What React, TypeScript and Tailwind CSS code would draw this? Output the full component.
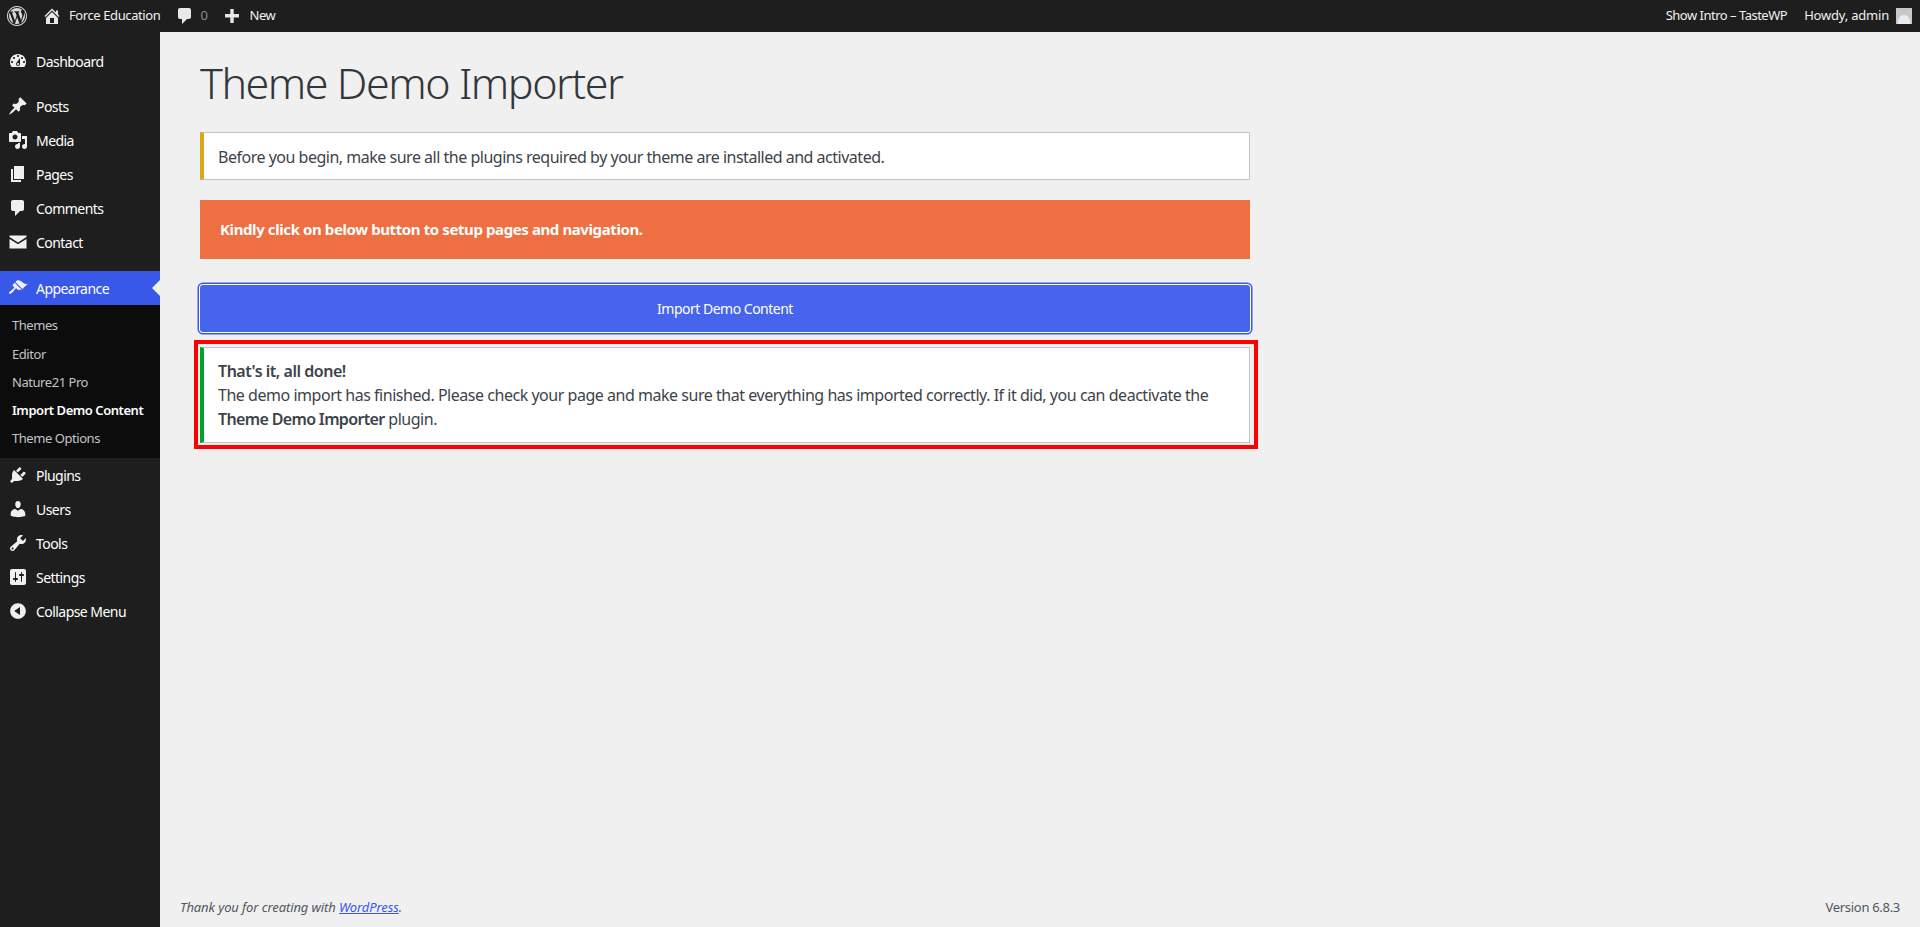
import React from 'react';

const icons = {
  dashboard: 'M3.76 16h12.48c1.1-1.37 1.76-3.11 1.76-5 0-4.42-3.58-8-8-8s-8 3.58-8 8c0 1.89.66 3.63 1.76 5zM10 4c.55 0 1 .45 1 1s-.45 1-1 1-1-.45-1-1 .45-1 1-1zM6 6c.55 0 1 .45 1 1s-.45 1-1 1-1-.45-1-1 .45-1 1-1zm8 0c.55 0 1 .45 1 1s-.45 1-1 1-1-.45-1-1 .45-1 1-1zm-5.37 5.55L12 7v6c0 1.1-.9 2-2 2s-2-.9-2-2c0-.57.24-1.08.63-1.45zM4 10c.55 0 1 .45 1 1s-.45 1-1 1-1-.45-1-1 .45-1 1-1zm12 0c.55 0 1 .45 1 1s-.45 1-1 1-1-.45-1-1 .45-1 1-1zm-5 3c0-.55-.45-1-1-1s-1 .45-1 1 .45 1 1 1 1-.45 1-1z',
  posts: 'M10.44 3.02l1.82-1.82 6.36 6.35-1.83 1.82c-1.05-.68-2.48-.57-3.41.36l-.75.75c-.92.93-1.04 2.35-.35 3.41l-1.83 1.82-2.41-2.41-2.8 2.79c-.42.42-3.38 2.71-3.8 2.29s1.86-3.39 2.28-3.81l2.79-2.79L4.1 9.36l1.83-1.82c1.05.69 2.48.57 3.4-.36l.75-.75c.93-.92 1.05-2.35.36-3.41z',
  media: 'M13 11V4c0-.55-.45-1-1-1h-1.67L9 1H5L3.67 3H2c-.55 0-1 .45-1 1v7c0 .55.45 1 1 1h10c.55 0 1-.45 1-1zM7 4.5c1.38 0 2.5 1.12 2.5 2.5S8.38 9.5 7 9.5 4.5 8.38 4.5 7 5.62 4.5 7 4.5zM14 6h5v10.5c0 1.38-1.12 2.5-2.5 2.5S14 17.88 14 16.5s1.12-2.5 2.5-2.5c.17 0 .34.02.5.05V9h-3V6zm-4 8.05V13h2v3.5c0 1.38-1.12 2.5-2.5 2.5S7 17.88 7 16.5 8.12 14 9.5 14c.17 0 .34.02.5.05z',
  pages: 'M6 15V2h10v13H6zm-1 1h8v2H3V5h2v11z',
  comments: 'M5 2h9c1.1 0 2 .9 2 2v7c0 1.1-.9 2-2 2h-2l-5 5v-5H5c-1.1 0-2-.9-2-2V4c0-1.1.9-2 2-2z',
  contact: 'M1.5 3.5h17v1.6L10 10.4 1.5 5.1V3.5zM1.5 7l8.5 5.3L18.500 7v9.500h-17V7z',
  appearance: 'M14.48 11.06L7.41 3.99l1.5-1.5c.5-.56 2.3-.47 3.51.32 1.21.8 1.43 1.28 2.91 2.1 1.18.64 2.45 1.26 4.45.85zm-.71.71L6.7 4.7 4.93 6.47c-.39.39-.39 1.02 0 1.41l1.06 1.06c.39.39.39 1.03 0 1.42-.6.6-1.43 1.11-2.21 1.69-.35.26-.7.53-1.01.84C1.43 13.23.4 14.75 1.2 15.55s2.32-.23 3.69-1.59c.31-.31.58-.66.84-1.01.58-.78 1.09-1.61 1.69-2.21.39-.39 1.02-.39 1.41 0l1.06 1.06c.39.39 1.02.39 1.41 0z',
  plugins: 'M13.11 4.36L9.87 7.6 8 5.73l3.24-3.24c.35-.34 1.05-.2 1.56.32.52.51.66 1.21.31 1.55zm-8 1.77l.91-1.12 9.01 9.01-1.19.84c-.71.71-2.63 1.16-3.82 1.16H6.14L4.9 17.26c-.59.59-1.54.59-2.12 0-.59-.58-.59-1.53 0-2.12l1.24-1.24v-3.88c0-1.13.4-3.19 1.09-3.89zm7.26 3.97l3.24-3.24c.34-.35 1.04-.21 1.55.31.52.51.66 1.21.31 1.55l-3.24 3.25z',
  users: 'M10 9.25c-2.27 0-2.73-3.44-2.73-3.44C7 4.02 7.82 2 9.97 2c2.16 0 2.98 2.02 2.71 3.81 0 0-.41 3.44-2.68 3.44zm0 2.57L12.72 10c2.39 0 4.52 2.33 4.52 4.53v2.49s-3.65 1.13-7.24 1.13c-3.65 0-7.24-1.13-7.24-1.13v-2.49c0-2.25 1.94-4.48 4.47-4.48z',
  tools: 'M16.68 9.77c-1.34 1.34-3.3 1.67-4.95.99l-5.41 6.52c-.99.99-2.59.99-3.58 0s-.99-2.59 0-3.57l6.52-5.42c-.68-1.65-.35-3.61.99-4.95 1.28-1.28 3.12-1.62 4.72-1.06l-2.89 2.89 2.82 2.82 2.86-2.87c.53 1.58.18 3.39-1.08 4.65zM3.81 16.21c.4.39 1.04.39 1.43 0 .4-.4.4-1.04 0-1.43-.39-.4-1.03-.4-1.43 0-.39.39-.39 1.03 0 1.43z',
  settings: 'M18 16V4c0-1.1-.9-2-2-2H4c-1.1 0-2 .9-2 2v12c0 1.1.9 2 2 2h12c1.1 0 2-.9 2-2zM8 11h1c.55 0 1 .45 1 1s-.45 1-1 1H8v1.5c0 .28-.22.5-.5.5s-.5-.22-.5-.5V13H6c-.55 0-1-.45-1-1s.45-1 1-1h1V5.5c0-.28.22-.5.5-.5s.5.22.5.5V11zm5-2h-1c-.55 0-1-.45-1-1s.45-1 1-1h1V5.5c0-.28.22-.5.5-.5s.5.22.5.5V7h1c.55 0 1 .45 1 1s-.45 1-1 1h-1v5.5c0 .28-.22.5-.5.5s-.5-.22-.5-.5V9z',
  collapse: 'M10 2.16c4.33 0 7.84 3.51 7.84 7.84s-3.51 7.84-7.84 7.84S2.16 14.33 2.16 10 5.71 2.16 10 2.16zm2 11.72V6.12L6.18 9.97z',
  wordpress: 'M20 10c0-5.52-4.48-10-10-10S0 4.48 0 10s4.48 10 10 10 10-4.48 10-10zM10 1.010c4.970 0 8.990 4.020 8.990 8.990s-4.020 8.990-8.990 8.990S1.010 14.970 1.010 10 5.030 1.010 10 1.010zM8.010 14.820L4.960 6.610c.490-.030 1.050-.080 1.050-.080.430-.050.380-1.010-.060-.990 0 0-1.290.100-2.130.100-.150 0-.330 0-.520-.010 1.440-2.170 3.900-3.600 6.700-3.600 2.090 0 3.990.790 5.410 2.090-.600-.100-1.450.350-1.450 1.420 0 .660.380 1.220.790 1.880.310.540.500 1.220.500 2.210 0 1.340-1.270 4.480-1.270 4.480l-2.710-7.500c.480-.030.750-.160.750-.160.430-.050.380-1.100-.050-1.080 0 0-1.300.110-2.140.110-.780 0-2.110-.110-2.110-.110-.430-.020-.480 1.060-.050 1.080l.840.080 1.120 3.040zm6.020 2.150L16.640 10s.670-1.690.390-3.810c.630 1.140.940 2.420.940 3.810 0 2.960-1.560 5.580-3.940 6.970zM2.680 6.770L6.500 17.250c-2.670-1.300-4.470-4.080-4.470-7.250 0-1.160.200-2.230.650-3.230zm7.450 4.530l2.290 6.250c-.760.270-1.570.420-2.420.420-.720 0-1.410-.110-2.060-.300z',
  home: 'M16 8.500l1.530 1.530-1.060 1.060L10 4.620l-6.470 6.470-1.060-1.060L10 2.500l4 4v-2h2v4zm-6-2.460l6 5.990V18H4v-5.970zM12 17v-5H8v5h4z',
  plus: 'M17 8v3.500h-5.300V17H8.300v-5.500H3V8h5.300V3h3.400v5H17z',
};

const Icon: React.FC<{ d: string, className?: string }> = ({ d, className }) => (
  <svg viewBox="0 0 20 20" className={className} fill="currentColor" fillRule="evenodd">
    <path d={d} />
  </svg>
);

const MenuItem: React.FC<{ label: string, icon: string, active?: boolean }> = ({ label, icon, active }) => (
  <div className={`relative flex h-[34px] items-center text-[14px] text-white ${active ? 'bg-[#3858e9]' : ''}`}>
    <Icon d={icon} className="ml-[8px] h-[20px] w-[20px] text-[#f0f0f1]" />
    <span className="ml-[8px] pt-[1px] tracking-[-0.55px]">{label}</span>
    {active && (
      <span className="absolute right-0 top-[9px] h-0 w-0 border-y-[8px] border-r-[8px] border-y-transparent border-r-[#f0f0f1]" />
    )}
  </div>
);

const SubItem: React.FC<{ label: string, current?: boolean }> = ({ label, current }) => (
  <div className={`flex h-[28.2px] items-center pl-[12px] text-[13px] tracking-[-0.45px] ${current ? 'font-semibold text-white' : 'text-[#c3c4c7]'}`}>
    {label}
  </div>
);

const App: React.FC = () => {
  return (
    <div className="flex h-screen flex-col overflow-hidden bg-[#f0f0f1] font-['Noto_Sans','Open_Sans',sans-serif] text-[#3c434a]">
      {/* admin bar */}
      <header className="flex h-[32px] shrink-0 items-center bg-[#1e1e1e] text-[13px] tracking-[-0.4px] text-[#f0f0f1]">
        <Icon d={icons.wordpress} className="ml-[7px] h-[20px] w-[20px] text-[#d8d8d8]" />
        <Icon d={icons.home} className="ml-[15px] h-[20px] w-[20px] text-[#e8e8e8]" />
        <span className="ml-[7px]">Force Education</span>
        <Icon d={icons.comments} className="ml-[15px] h-[20px] w-[20px] text-[#e8e8e8]" />
        <span className="ml-[5px] text-[#8a8a8a]">0</span>
        <Icon d={icons.plus} className="ml-[15px] h-[20px] w-[20px] text-[#e8e8e8]" />
        <span className="ml-[7px]">New</span>
        <span className="ml-auto tracking-[-0.5px]">Show Intro – TasteWP</span>
        <span className="ml-[17px] tracking-[-0.2px]">Howdy, admin</span>
        <div className="ml-[7px] mr-[8px] flex h-[16px] w-[16px] items-end justify-center overflow-hidden bg-[#c8c8c8]">
          <div className="h-[9px] w-[12px] rounded-t-full bg-[#ececec]" />
        </div>
      </header>

      <div className="flex min-h-0 flex-1">
        {/* sidebar */}
        <aside className="w-[160px] shrink-0 bg-[#1e1e1e] pt-[12px]">
          <MenuItem label="Dashboard" icon={icons.dashboard} />
          <div className="h-[11px]" />
          <MenuItem label="Posts" icon={icons.posts} />
          <MenuItem label="Media" icon={icons.media} />
          <MenuItem label="Pages" icon={icons.pages} />
          <MenuItem label="Comments" icon={icons.comments} />
          <MenuItem label="Contact" icon={icons.contact} />
          <div className="h-[12px]" />
          <MenuItem label="Appearance" icon={icons.appearance} active />
          <div className="bg-[#0c0c0c] pb-[5px] pt-[7px]">
            <SubItem label="Themes" />
            <SubItem label="Editor" />
            <SubItem label="Nature21 Pro" />
            <SubItem label="Import Demo Content" current />
            <SubItem label="Theme Options" />
          </div>
          <MenuItem label="Plugins" icon={icons.plugins} />
          <MenuItem label="Users" icon={icons.users} />
          <MenuItem label="Tools" icon={icons.tools} />
          <MenuItem label="Settings" icon={icons.settings} />
          <MenuItem label="Collapse Menu" icon={icons.collapse} />
        </aside>

        {/* main */}
        <main className="flex min-w-0 flex-1 flex-col">
          <div className="flex-1 pl-[40px]">
            <div className="w-[1050px]">
              <h1 className="pt-[25px] text-[43px] font-light leading-[52px] tracking-[-1.45px] text-[#32373c]">Theme Demo Importer</h1>

              <div className="mt-[23px] flex h-[48px] items-center border border-l-4 border-[#c3c4c7] border-l-[#dba617] bg-white pl-[14px] pt-[1px] text-[16px] tracking-[-0.49px]">
                Before you begin, make sure all the plugins required by your theme are installed and activated.
              </div>

              <div className="mt-[20px] flex h-[59px] items-center bg-[#ee6f42] pl-[20px] text-[15px] font-bold tracking-[-0.4px] text-white">
                Kindly click on below button to setup pages and navigation.
              </div>

              <button className="mt-[26px] block h-[47px] w-full rounded-[3px] bg-[#4664ec] text-[14px] tracking-[-0.5px] text-white shadow-[0_0_0_1px_#fff,0_0_0_2.500px_#3858e9]">
                Import Demo Content
              </button>

              <div className="-ml-[6px] mt-[8px] w-[1064px] border-[4px] border-[#ff0000] pb-[2px] pl-[2px] pr-[4px] pt-[3px]">
                <div className="border border-l-4 border-[#c3c4c7] border-l-[#00a32a] bg-white py-[11px] pl-[14px] text-[16px] leading-[24px] tracking-[-0.47px]">
                  <strong className="font-semibold">That's it, all done!</strong>
                  <br />
                  The demo import has finished. Please check your page and make sure that everything has imported correctly. If it did, you can deactivate the{' '}
                  <strong className="font-semibold tracking-[-0.65px]">Theme Demo Importer</strong> plugin.
                </div>
              </div>
            </div>
          </div>

          <footer className="flex h-[29px] shrink-0 items-start justify-between pl-[20px] pr-[20px] text-[13px] text-[#50575e]">
            <span className="italic tracking-[-0.1px]">
              Thank you for creating with <a className="text-[#3858e9] underline">WordPress</a>.
            </span>
            <span className="tracking-[-0.3px]">Version 6.8.3</span>
          </footer>
        </main>
      </div>
    </div>
  );
};

export default App;
